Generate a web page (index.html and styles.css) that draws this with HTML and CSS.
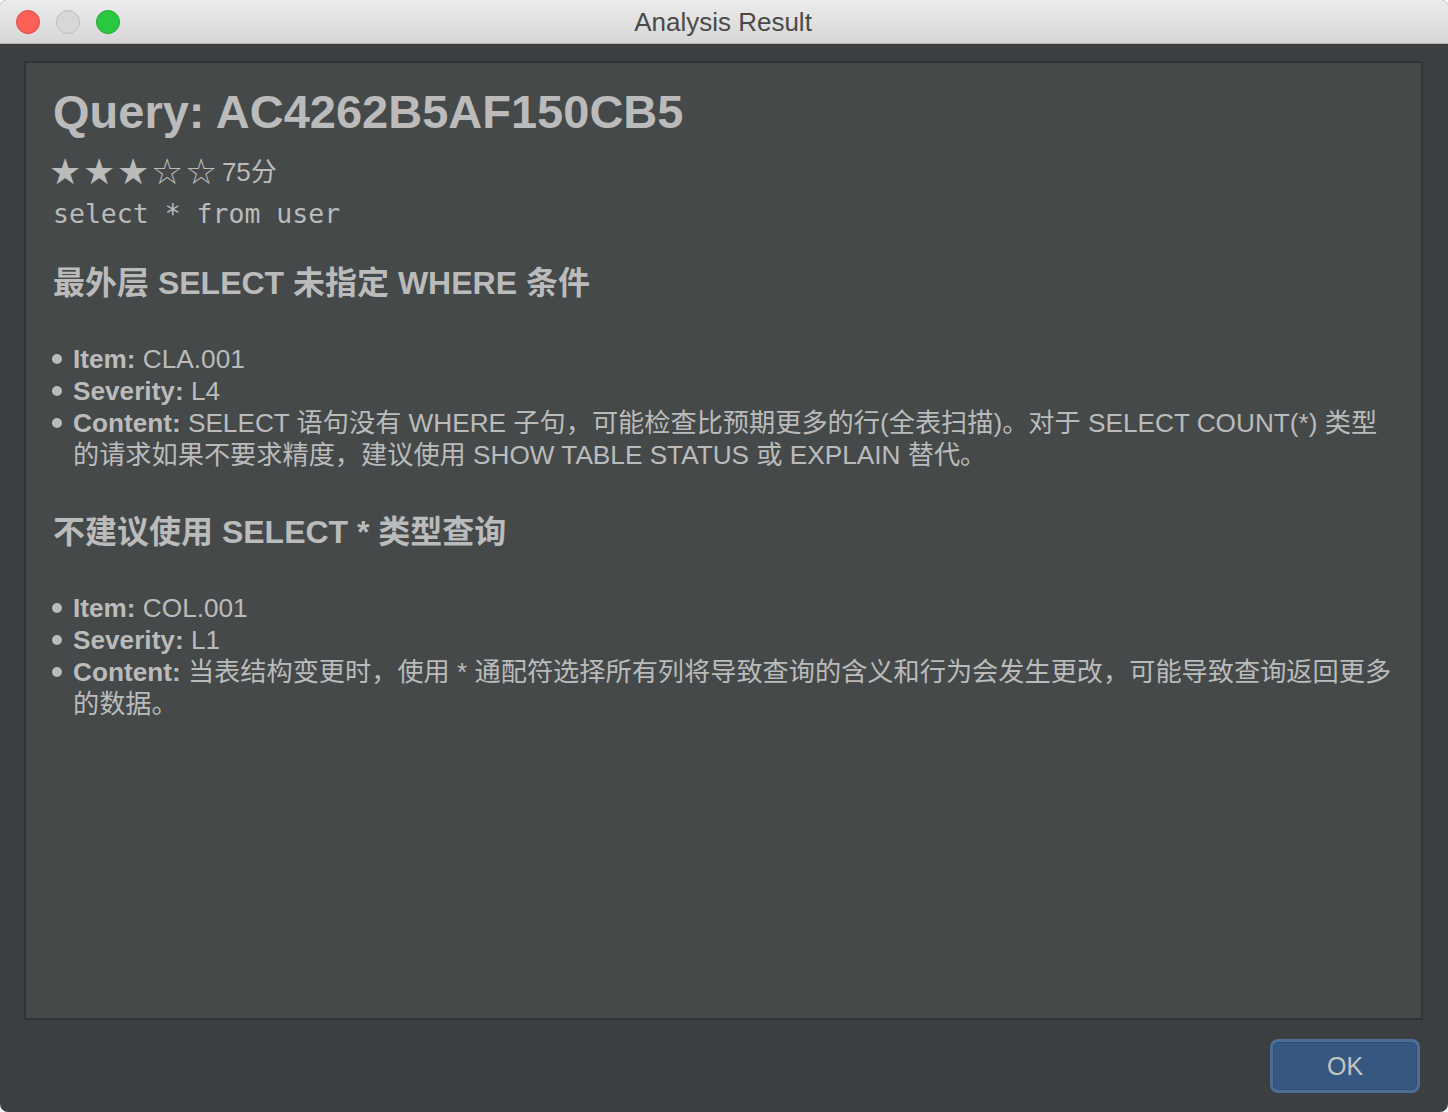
FILE: index.html
```html
<!DOCTYPE html>
<html>
<head>
<meta charset="utf-8">
<link rel="stylesheet" href="styles.css">
</head>
<body>
<div class="window">
  <div class="titlebar">
    <div class="lights">
      <span class="light red"></span>
      <span class="light gray"></span>
      <span class="light green"></span>
    </div>
    <div class="title">Analysis Result</div>
    <div class="spacer"></div>
  </div>
  <div class="body">
    <div class="panel">
      <h1 class="query">Query: AC4262B5AF150CB5</h1>
      <div class="rating"><span class="stars">★★★☆☆</span><span class="score">75分</span></div>
      <div class="sql">select * from user</div>

      <h2 class="rule">最外层 SELECT 未指定 WHERE 条件</h2>
      <ul class="facts">
        <li><p><b>Item:</b> CLA.001</p></li>
        <li><p><b>Severity:</b> L4</p></li>
        <li><p><b>Content:</b> SELECT 语句没有 WHERE 子句，可能检查比预期更多的行(全表扫描)。对于 SELECT COUNT(*) 类型<br>的请求如果不要求精度，建议使用 SHOW TABLE STATUS 或 EXPLAIN 替代。</p></li>
      </ul>

      <h2 class="rule">不建议使用 SELECT * 类型查询</h2>
      <ul class="facts">
        <li><p><b>Item:</b> COL.001</p></li>
        <li><p><b>Severity:</b> L1</p></li>
        <li><p><b>Content:</b> 当表结构变更时，使用 * 通配符选择所有列将导致查询的含义和行为会发生更改，可能导致查询返回更多<br>的数据。</p></li>
      </ul>
    </div>
    <div class="footer">
      <button class="ok">OK</button>
    </div>
  </div>
</div>
</body>
</html>
```

FILE: styles.css
```css
* { box-sizing: border-box; }
html, body { margin: 0; padding: 0; background: #ffffff; }
body { width: 1448px; height: 1112px; overflow: hidden; }

.window {
  width: 1448px;
  height: 1112px;
  border-radius: 6px 6px 8px 8px;
  overflow: hidden;
  background: #3c3f41;
  display: flex;
  flex-direction: column;
  font-family: "Liberation Sans", "Noto Sans CJK SC", sans-serif;
}

.titlebar {
  height: 44px;
  flex: none;
  background: linear-gradient(#ececec, #d6d6d6);
  border-bottom: 1px solid #b1b1b1;
  display: grid;
  grid-template-columns: 1fr auto 1fr;
  align-items: center;
  padding-left: 16px;
}
.lights { display: flex; gap: 16px; }
.light { width: 24px; height: 24px; border-radius: 50%; display: block; }
.red { background: #fe5f57; border: 1px solid #e2463f; }
.gray { background: #d7d7d7; border: 1px solid #bdbdbd; }
.green { background: #2ac840; border: 1px solid #1ea832; }
.title {
  font-family: "Liberation Sans", sans-serif;
  font-size: 26px;
  color: #4a4a4a;
  padding-top: 1px;
  margin-left: -18px;
}

.body {
  flex: 1;
  display: flex;
  flex-direction: column;
  padding: 17px 25px 0 24px;
}

.panel {
  height: 959px;
  flex: none;
  background: #45494a;
  border: 2px solid #313335;
  padding: 21px 10px 0 27px;
  color: #bbbbbb;
}

.query {
  margin: 0;
  font-family: "Liberation Sans", sans-serif;
  font-weight: bold;
  font-size: 47px;
  line-height: 56px;
  color: #bbbbbb;
}

.rating {
  margin-top: 12px;
  height: 40px;
  display: flex;
  align-items: center;
}
.stars {
  font-family: "DejaVu Sans", "Noto Sans CJK SC", sans-serif;
  font-size: 36px;
  letter-spacing: 1.7px;
  line-height: 40px;
  margin-left: -4px;
}
.score {
  font-family: "Liberation Sans", "Noto Sans CJK SC", sans-serif;
  font-size: 26px;
  line-height: 40px;
  margin-left: 3px;
}

.sql {
  margin-top: 2px;
  font-family: "DejaVu Sans Mono", monospace;
  font-size: 26.5px;
  line-height: 40px;
}

.rule {
  margin: 29px 0 0 0;
  font-family: "Liberation Sans", "Noto Sans CJK SC", sans-serif;
  font-weight: bold;
  font-size: 32px;
  line-height: 40px;
  color: #bbbbbb;
}

.facts {
  list-style: none;
  margin: 40px 0 0 0;
  padding: 0;
  font-size: 26.2px;
  line-height: 32px;
}
.facts + .rule { margin-top: 41px; }
.facts li {
  display: grid;
  grid-template-columns: 20px 1fr;
}
.facts li::before {
  content: "";
  width: 10px;
  height: 10px;
  border-radius: 50%;
  background: #bbbbbb;
  margin: 11px 0 0 -1px;
}
.facts p { margin: 0; white-space: nowrap; }
.facts b { font-weight: bold; }

.footer {
  flex: 1;
  display: flex;
  justify-content: flex-end;
  align-items: flex-start;
  padding: 19px 3px 0 0;
}
.ok {
  width: 150px;
  height: 54px;
  border-radius: 8px;
  background: #365880;
  border: 3px solid #4a6e98;
  box-shadow: inset 0 0 0 1px #2f4e74;
  color: #c4c4c4;
  font-family: "Liberation Sans", sans-serif;
  font-size: 25px;
  padding: 0;
}
```
